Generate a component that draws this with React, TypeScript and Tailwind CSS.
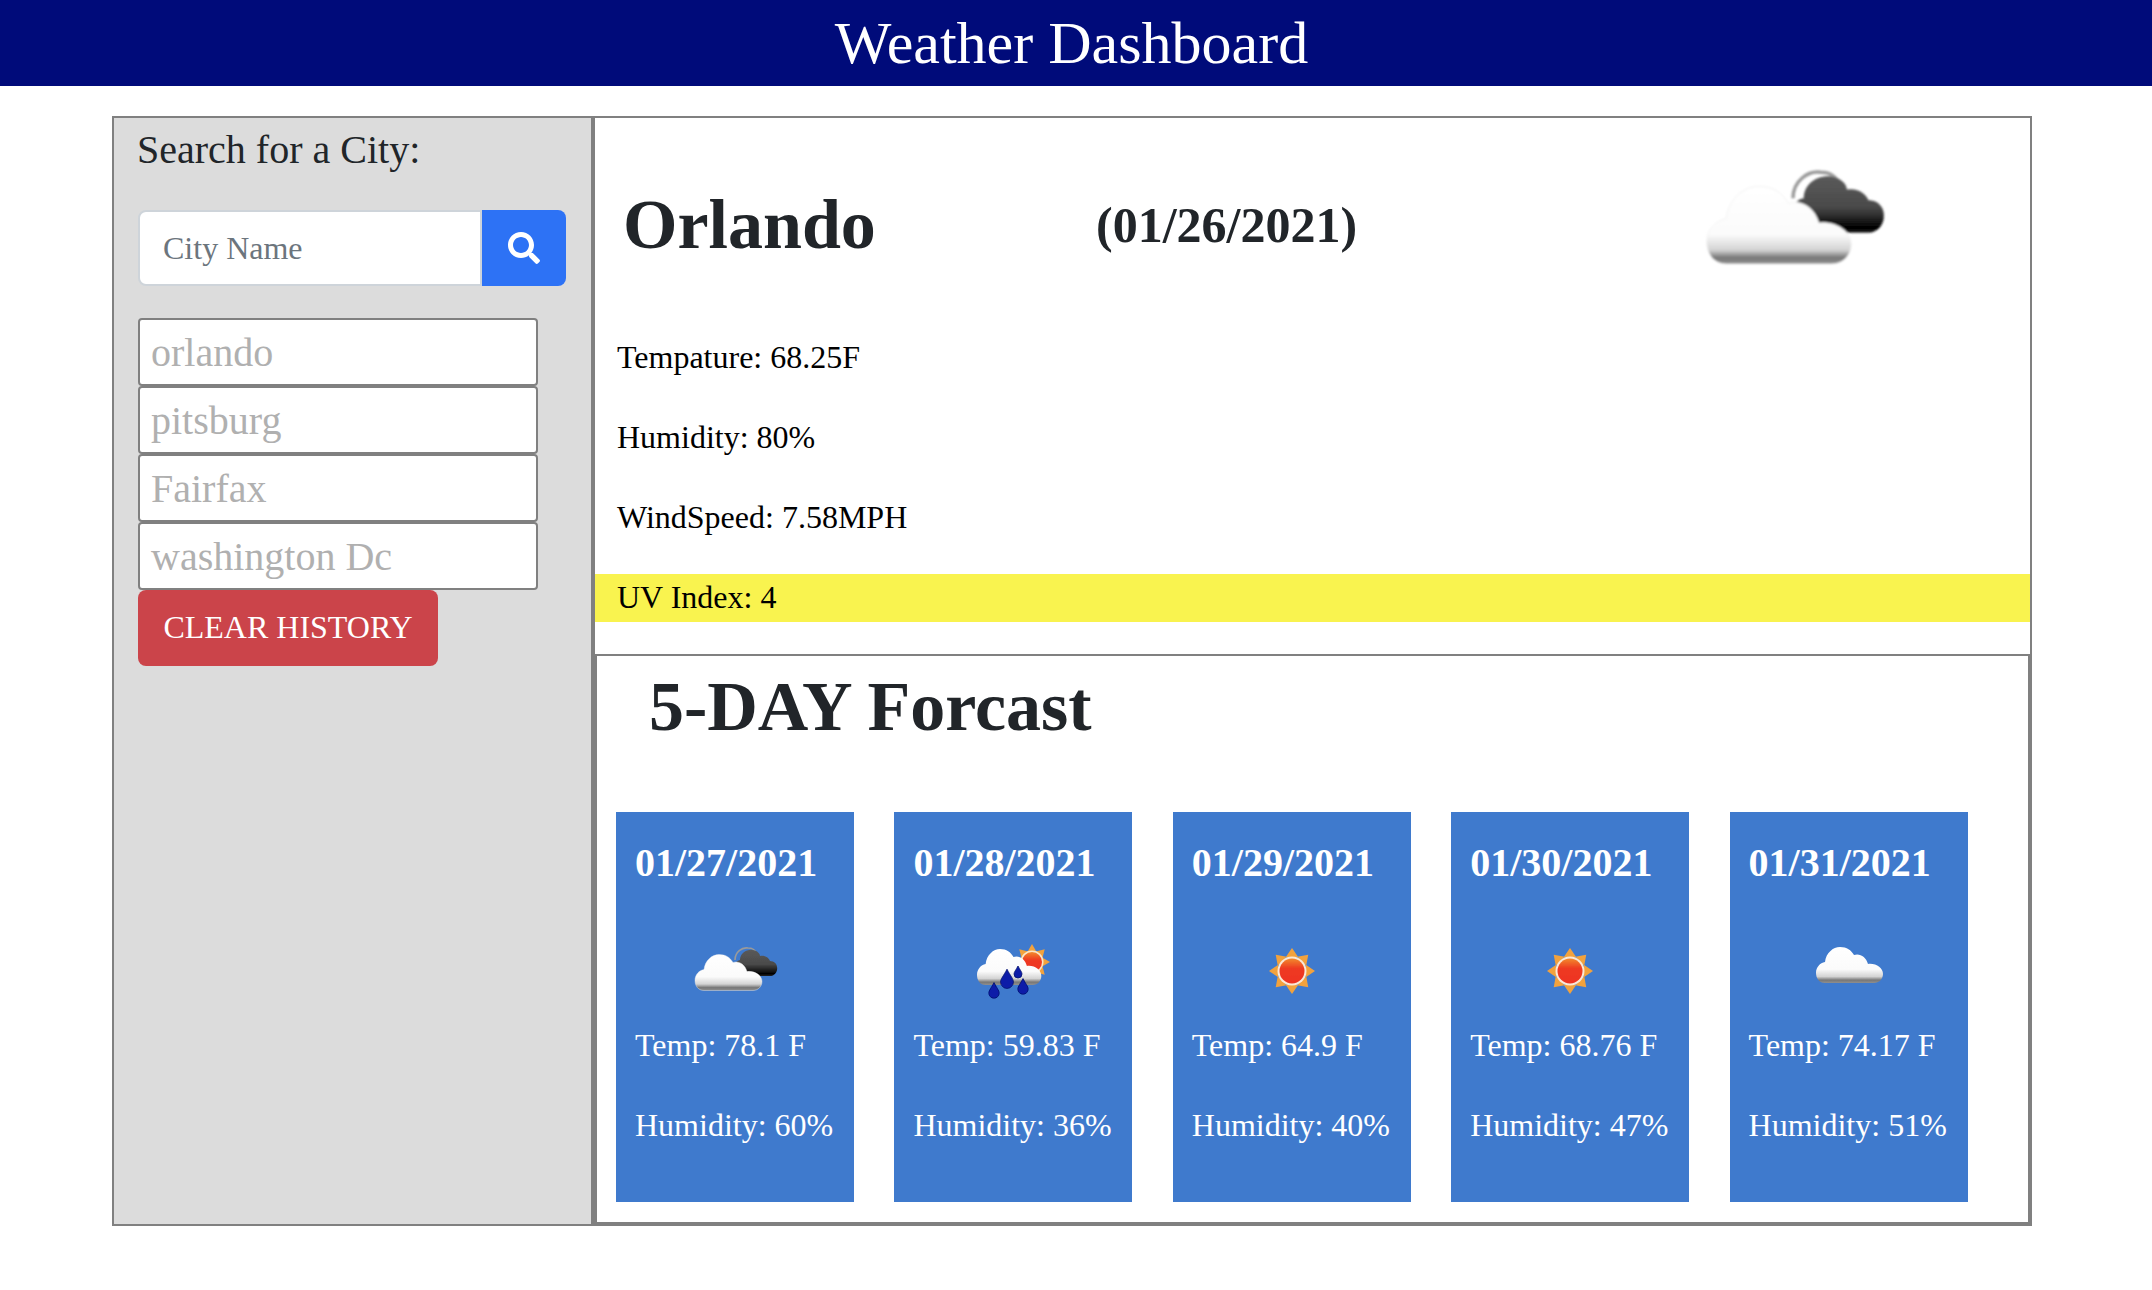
import { FaSearch } from 'react-icons/fa';

const cloudPath = 'M9 36C3 36 0 31 0 26C0 20 4 16 9 15C10 6 17 0 24 0C31 0 35 3 38 8C44 6 50 10 52 17C60 16 67 21 67 27C67 32 63 36 58 36Z';
const darkPath = 'M7 21C2 19 2 12 8 11C8 4 15 0 21 1C26 2 28 5 28 7C33 6 37 9 38 12C43 12 46 16 45 21C44 25 41 27 38 27H18C14 27 10 25 7 21Z';

const forecast = [
    { date: '01/27/2021', temp: '78.1', humidity: '60', icon: 'broken' },
    { date: '01/28/2021', temp: '59.83', humidity: '36', icon: 'rain' },
    { date: '01/29/2021', temp: '64.9', humidity: '40', icon: 'sun' },
    { date: '01/30/2021', temp: '68.76', humidity: '47', icon: 'sun' },
    { date: '01/31/2021', temp: '74.17', humidity: '51', icon: 'cloud' },
];

const history = ['orlando', 'pitsburg', 'Fairfax', 'washington Dc'];

function IconDefs() {
    return (
        <svg className="absolute w-0 h-0" aria-hidden="true">
            <defs>
                <linearGradient id="cloudFill" x1="0" y1="0" x2="0" y2="1">
                    <stop offset="0" stopColor="#ffffff" />
                    <stop offset="0.62" stopColor="#fbfbfb" />
                    <stop offset="0.82" stopColor="#d4d4d4" />
                    <stop offset="0.92" stopColor="#777777" />
                    <stop offset="1" stopColor="#8f8f8f" />
                </linearGradient>
                <linearGradient id="darkFill" x1="0" y1="0" x2="0" y2="1">
                    <stop offset="0" stopColor="#5a5a5a" />
                    <stop offset="0.55" stopColor="#4a4a4a" />
                    <stop offset="0.92" stopColor="#000000" />
                    <stop offset="1" stopColor="#222222" />
                </linearGradient>
                <linearGradient id="sunFill" x1="0" y1="0" x2="0" y2="1">
                    <stop offset="0" stopColor="#f28a2c" />
                    <stop offset="0.4" stopColor="#ee3a22" />
                    <stop offset="1" stopColor="#ee3322" />
                </linearGradient>
                <filter id="soft" x="-10%" y="-10%" width="120%" height="120%">
                    <feGaussianBlur stdDeviation="0.55" />
                </filter>
            </defs>
        </svg>
    );
}

function Rays({ cx, cy, inner, outer }: { cx: number; cy: number; inner: number; outer: number }) {
    return (
        <g fill="#f2a23e">
            {[0, 45, 90, 135, 180, 225, 270, 315].map((a) => (
                <polygon
                    key={a}
                    points={`${cx - inner * 0.42},${cy - inner * 0.92} ${cx},${cy - outer} ${cx + inner * 0.42},${cy - inner * 0.92}`}
                    transform={`rotate(${a} ${cx} ${cy})`}
                />
            ))}
        </g>
    );
}

function Drop({ x, y, r }: { x: number; y: number; r: number }) {
    return (
        <path
            d={`M${x} ${y - r * 2}C${x + r * 0.5} ${y - r} ${x + r} ${y - r * 0.5} ${x + r} ${y}A${r} ${r} 0 1 1 ${x - r} ${y}C${x - r} ${y - r * 0.5} ${x - r * 0.5} ${y - r} ${x} ${y - r * 2}Z`}
            fill="#0a1ea8"
            stroke="#02106e"
            strokeWidth="0.8"
        />
    );
}

function WeatherIcon({ kind, className, viewBox = '0 0 100 100' }: { kind: string; className: string; viewBox?: string }) {
    return (
        <svg viewBox={viewBox} className={className}>
            <g filter="url(#soft)">
                {kind === 'broken' && (
                    <>
                        <path d="M50 39C50 31 57 26 63 27C67 27 70 29 71 32" fill="none" stroke="#9a9a9a" strokeWidth="1.6" />
                        <path d={darkPath} transform="translate(47 28)" fill="url(#darkFill)" />
                        <path d={cloudPath} transform="translate(10 33.5)" fill="url(#cloudFill)" stroke="#f0f0f0" strokeWidth="0.4" />
                    </>
                )}
                {kind === 'rain' && (
                    <>
                        <Rays cx={69} cy={41} inner={11} outer={18} />
                        <circle cx={69} cy={41} r={11.5} fill="#fbe6c8" />
                        <circle cx={69} cy={41} r={10} fill="url(#sunFill)" />
                        <path d={cloudPath} transform="translate(14 28) scale(0.96 1)" fill="url(#cloudFill)" />
                        <Drop x={31} y={72} r={5.2} />
                        <Drop x={44} y={61} r={6.4} />
                        <Drop x={55} y={53} r={4} />
                        <Drop x={60} y={68} r={5.2} />
                    </>
                )}
                {kind === 'sun' && (
                    <>
                        <Rays cx={50} cy={50} inner={15} outer={23} />
                        <circle cx={50} cy={50} r={14.5} fill="#fbe9d6" />
                        <circle cx={50} cy={50} r={12.5} fill="url(#sunFill)" />
                    </>
                )}
                {kind === 'cloud' && <path d={cloudPath} transform="translate(17 26)" fill="url(#cloudFill)" />}
            </g>
        </svg>
    );
}

export default function App() {
    return (
        <div className="min-h-[1290px] bg-white text-[#212529] font-['Liberation_Serif',serif]">
            <IconDefs />
            <header className="h-[86px] bg-[#000b7a] flex items-center justify-center pr-[9px]">
                <h1 className="text-[60px] leading-[84px] text-white">Weather Dashboard</h1>
            </header>

            <main className="ml-[112px] mt-[30px] w-[1920px] h-[1110px] flex border-2 border-[#808080]">
                {/* Sidebar */}
                <aside className="w-[479px] shrink-0 bg-[#dcdcdc] border-r-2 border-[#808080] pl-[24px]">
                    <h5 className="text-[40px] leading-[48px] mt-[8px] -ml-[1px]">Search for a City:</h5>
                    <div className="flex w-[428px] h-[76px] mt-[36px]">
                        <input
                            placeholder="City Name"
                            className="w-[344px] bg-white border-2 border-[#ced4da] rounded-l-[8px] pl-[23px] text-[32px] placeholder:text-[#6c757d] outline-none"
                        />
                        <button className="flex-1 bg-[#2d72f5] rounded-r-[8px] flex items-center justify-center text-white">
                            <FaSearch className="w-[32px] h-[32px]" />
                        </button>
                    </div>
                    <div className="mt-[32px] w-[400px]">
                        {history.map((city) => (
                            <div
                                key={city}
                                className="h-[68px] bg-white border-2 border-[#808080] rounded-[4px] px-[11px] text-[40px] leading-[66px] text-[#b0b0b0]"
                            >
                                {city}
                            </div>
                        ))}
                    </div>
                    <button className="w-[300px] h-[76px] bg-[#cb444a] rounded-[8px] text-[32px] pb-[2px] text-white">CLEAR HISTORY</button>
                </aside>

                {/* Main column */}
                <section className="flex-1 flex flex-col border-l-2 border-[#808080]">
                    <div className="h-[536px] shrink-0">
                        <div className="h-[216px] flex items-start pt-[39px]">
                            <h1 className="text-[70px] leading-[76px] font-bold ml-[28px] mt-[30px] w-[473px]">Orlando</h1>
                            <h2 className="text-[50px] leading-[60px] font-bold mt-[38px] w-[600px]">(01/26/2021)</h2>
                            <WeatherIcon kind="broken" viewBox="5 20 90 55" className="w-[194px] h-[119px]" />
                        </div>
                        <div className="text-[32px] leading-[46px] text-black">
                            <p className="pl-[22px] pb-[2px] mb-[32px]">Tempature: 68.25F</p>
                            <p className="pl-[22px] pb-[2px] mb-[32px]">Humidity: 80%</p>
                            <p className="pl-[22px] pb-[2px] mb-[32px]">WindSpeed: 7.58MPH</p>
                            <p className="pl-[22px] pb-[2px] bg-[#f9f34f]">UV Index: 4</p>
                        </div>
                    </div>

                    <div className="flex-1 border-2 border-[#808080] pl-[19px]">
                        <h2 className="text-[70px] leading-[84px] font-bold ml-[33px] mt-[9px]">5-DAY Forcast</h2>
                        <div className="flex gap-[40.4px] mt-[63px]">
                            {forecast.map((day) => (
                                <div key={day.date} className="w-[238px] h-[390px] bg-[#3f7acd] text-white px-[19px] pt-[27px]">
                                    <h5 className="text-[40px] leading-[48px] font-bold">{day.date}</h5>
                                    <div className="flex justify-center mt-[34px] mx-[-19px]">
                                        <WeatherIcon kind={day.icon} className="w-[100px] h-[100px]" />
                                    </div>
                                    <p className="text-[32px] leading-[48px] mb-[32px] whitespace-nowrap">Temp: {day.temp} F</p>
                                    <p className="text-[32px] leading-[48px] whitespace-nowrap">Humidity: {day.humidity}%</p>
                                </div>
                            ))}
                        </div>
                    </div>
                </section>
            </main>
        </div>
    );
}
